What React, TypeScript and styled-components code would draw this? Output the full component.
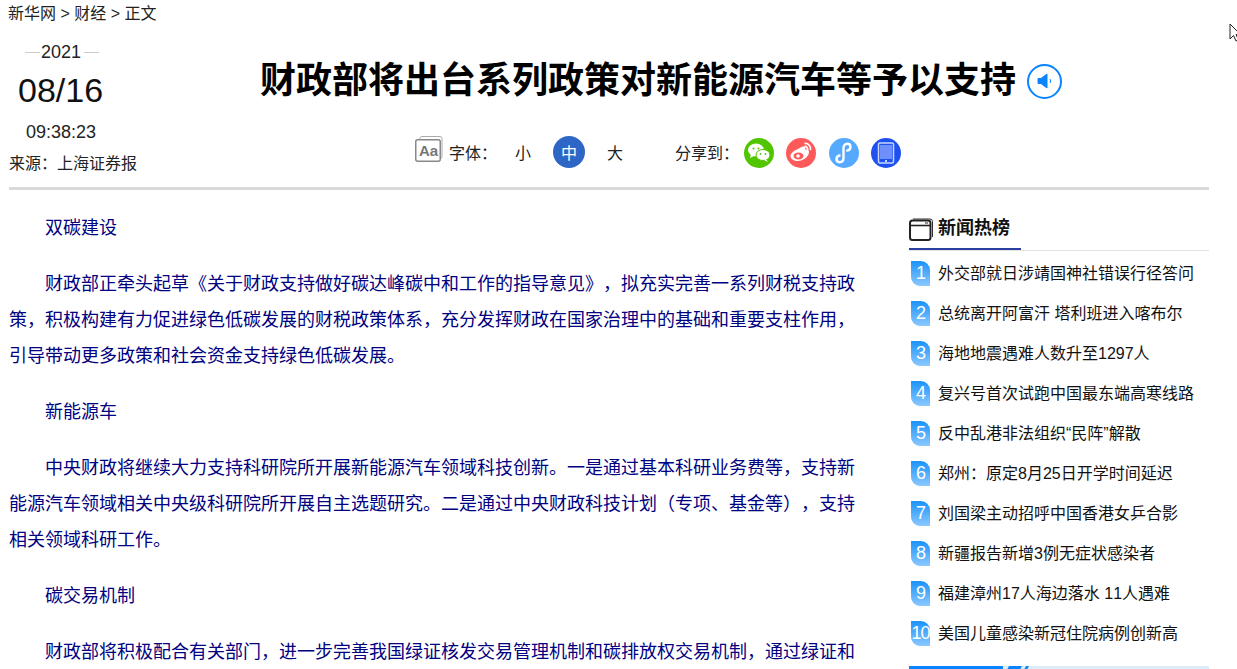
import { createGlobalStyle, styled } from 'styled-components';

const GlobalStyle = createGlobalStyle`
  html, body {
    margin: 0;
    padding: 0;
    height: 669px;
    overflow: hidden;
    background: #fff;
    font-family: "Liberation Sans", "Noto Sans CJK SC", sans-serif;
    font-kerning: none;
    text-spacing-trim: space-all;
  }
`;

const hotNews = [
  '外交部就日涉靖国神社错误行径答问',
  '总统离开阿富汗 塔利班进入喀布尔',
  '海地地震遇难人数升至1297人',
  '复兴号首次试跑中国最东端高寒线路',
  '反中乱港非法组织“民阵”解散',
  '郑州：原定8月25日开学时间延迟',
  '刘国梁主动招呼中国香港女乒合影',
  '新疆报告新增3例无症状感染者',
  '福建漳州17人海边落水 11人遇难',
  '美国儿童感染新冠住院病例创新高',
];

const App = () => {
  return (
    <Page>
      <GlobalStyle />
      <Header>
        <Breadcrumb>新华网 &gt; 财经 &gt; 正文</Breadcrumb>
        <HeaderMain>
          <DateBlock>
            <Year>2021</Year>
            <MonthDay>08/16</MonthDay>
            <Time>09:38:23</Time>
            <Source>来源：上海证券报</Source>
          </DateBlock>
          <TitleBlock>
            <TitleRow>
              <Title>财政部将出台系列政策对新能源汽车等予以支持</Title>
              <SpeakerButton>
                <svg width="16" height="16" viewBox="0 0 16 16">
                  <path d="M1 5.500h3L10 1v14L4 10.500H1z" fill="#0a84ff" stroke="#0a84ff" strokeLinejoin="round" />
                  <path d="M13 6c.7 1.200.7 2.800 0 4" fill="none" stroke="#0a84ff" />
                </svg>
              </SpeakerButton>
            </TitleRow>
            <Tools>
              <FontIcon width="28" height="26" viewBox="0 0 28 26">
                <path d="M5 3V2.500a2 2 0 0 1 2-2h18a2 2 0 0 1 2 2v18a2 2 0 0 1-2 2" fill="none" stroke="#aaa" />
                <rect x=".75" y="3.750" width="24.500" height="21.500" rx="2" fill="#fff" stroke="#888" strokeWidth="1.500" />
                <text x="4" y="20" fontSize="15" fontWeight="700" fill="#777" fontFamily="Liberation Sans">Aa</text>
              </FontIcon>
              <ToolLabel>字体：</ToolLabel>
              <SizeOption>小</SizeOption>
              <SizeOption $active>中</SizeOption>
              <SizeOption>大</SizeOption>
              <ShareLabel>分享到：</ShareLabel>
              <ShareIcon $bg="#50c500">
                <svg width="24" height="22" viewBox="0 0 24 22">
                  <ellipse cx="9" cy="8" rx="8" ry="6.500" fill="#fff" />
                  <path d="M4 12l-1 4 4-2z" fill="#fff" />
                  <ellipse cx="16" cy="13" rx="7" ry="5.500" fill="#fff" stroke="#50c500" />
                  <path d="M19 17l2 3-4-2z" fill="#fff" />
                  <circle cx="6.500" cy="6.500" r="1" fill="#50c500" />
                  <circle cx="11.500" cy="6.500" r="1" fill="#50c500" />
                  <circle cx="13.500" cy="12" r=".9" fill="#50c500" />
                  <circle cx="18.500" cy="12" r=".9" fill="#50c500" />
                </svg>
              </ShareIcon>
              <ShareIcon $bg="#ff5a5a">
                <svg width="24" height="22" viewBox="0 0 24 22">
                  <path d="M10 6.500c3.500-2.500 6-2.300 6.300-.8.200.9-.1 1.800-.1 2.100 2.100-.6 3.800 0 3.800 1.900C20 14.500 14.500 19 8.500 19 4.300 19 1.500 16.800 1.500 14 1.500 11.300 5.500 8 10 6.500z" fill="#fff" />
                  <ellipse cx="9.500" cy="14" rx="5" ry="3.400" fill="#ff5a5a" />
                  <circle cx="9" cy="14" r="1.800" fill="#fff" />
                  <path d="M15.500 1.500c3.700-.5 6.700 2.500 6 6.500M15.500 4.500c2-.3 3.500 1.400 3 3.500" fill="none" stroke="#fff" strokeWidth="1.700" />
                </svg>
              </ShareIcon>
              <ShareIcon $bg="#55aaff">
                <svg width="20" height="24" viewBox="0 0 20 24">
                  <path d="M5.500 14.500C3.500 15 2.500 16.300 2.500 18c0 1.800 1.300 3.200 3.200 3.200C8 21.200 9.500 19.500 9.500 17V7c0-2.500 1.500-4.200 3.800-4.200 1.900 0 3.200 1.400 3.200 3.200 0 1.900-1.300 3.200-3.300 3.600" fill="none" stroke="#fff" strokeWidth="2.400" strokeLinecap="round" />
                </svg>
              </ShareIcon>
              <ShareIcon $bg="#1f50f0">
                <svg width="18" height="22" viewBox="0 0 18 22">
                  <rect x="1.500" y="1" width="15" height="20" rx="1.500" fill="none" stroke="#c8d6ff" strokeWidth="1.500" />
                  <rect x="3" y="3" width="12" height="14" fill="#6f8ffa" />
                  <circle cx="9" cy="19" r="1" fill="#fff" />
                </svg>
              </ShareIcon>
            </Tools>
          </TitleBlock>
        </HeaderMain>
      </Header>
      <Content>
        <Article>
          <p>双碳建设</p>
          <p>财政部正牵头起草《关于财政支持做好碳达峰碳中和工作的指导意见》，拟充实完善一系列财税支持政策，积极构建有力促进绿色低碳发展的财税政策体系，充分发挥财政在国家治理中的基础和重要支柱作用，引导带动更多政策和社会资金支持绿色低碳发展。</p>
          <p>新能源车</p>
          <p>中央财政将继续大力支持科研院所开展新能源汽车领域科技创新。一是通过基本科研业务费等，支持新能源汽车领域相关中央级科研院所开展自主选题研究。二是通过中央财政科技计划（专项、基金等），支持相关领域科研工作。</p>
          <p>碳交易机制</p>
          <p>财政部将积极配合有关部门，进一步完善我国绿证核发交易管理机制和碳排放权交易机制，通过绿证和</p>
        </Article>
        <Sidebar>
          <SidebarHead>
            <SidebarTitle>
              <svg width="24" height="23" viewBox="0 0 24 23">
                <path d="M4 1h17a2.500 2.500 0 0 1 2.500 2.500V19" fill="none" stroke="#333" />
                <rect x="1" y="2.500" width="20.500" height="19.500" rx="2.500" fill="#fff" stroke="#222" strokeWidth="2" />
                <path d="M1 7.500h20.500" stroke="#222" strokeWidth="1.600" />
                <path d="M16 5h3" stroke="#222" />
              </svg>
              新闻热榜
            </SidebarTitle>
          </SidebarHead>
          <HotList>
            {hotNews.map((item, index) => (
              <HotItem key={item}>
                <Rank>{index + 1}</Rank>
                <HotText>{item}</HotText>
              </HotItem>
            ))}
          </HotList>
          <Banner>
            <BannerStrong />
            <BannerChip />
            <BannerSliver />
          </Banner>
        </Sidebar>
      </Content>
      <Cursor width="12" height="20" viewBox="0 0 12 20">
        <path d="M1 1v15l3.500-3.500L7 18l2.500-1-2.500-5.500h4.500z" fill="#fff" stroke="#222" />
      </Cursor>
    </Page>
  );
};

const Page = styled.div`
  position: relative;
  width: 1237px;
  height: 669px;
  overflow: hidden;
  padding-left: 9px;
  box-sizing: border-box;
  color: #000;
`;

const Header = styled.header`
  width: 1200px;
  height: 187px;
  border-bottom: 3px solid #d9d9d9;
  box-sizing: content-box;
`;

const Breadcrumb = styled.div`
  height: 27px;
  margin-left: -1px;
  font-size: 16px;
  line-height: 27px;
  color: #222;
`;

const HeaderMain = styled.div`
  display: flex;
`;

const DateBlock = styled.div`
  width: 128px;
  flex: none;
  display: flex;
  flex-direction: column;
  align-items: flex-start;
`;

const Year = styled.div`
  margin-top: 13px;
  display: flex;
  align-items: center;
  gap: 1px;
  font-size: 18px;
  line-height: 24px;
  color: #222;
  &::before,
  &::after {
    content: '';
    flex: none;
    width: 15px;
    height: 1px;
    background: #ccc;
  }
  &::before {
    margin-left: 16px;
  }
  &::after {
    margin-left: 2px;
  }
`;

const MonthDay = styled.div`
  margin: 4px 0 0 9px;
  font-size: 34px;
  line-height: 44px;
  color: #111;
`;

const Time = styled.div`
  margin: 8px 0 0 17px;
  font-size: 18px;
  line-height: 24px;
  color: #222;
`;

const Source = styled.div`
  margin-top: 8px;
  font-size: 16px;
  line-height: 24px;
  white-space: nowrap;
  color: #222;
`;

const TitleBlock = styled.div`
  flex: 1;
  display: flex;
  flex-direction: column;
  align-items: center;
`;

const TitleRow = styled.div`
  display: flex;
  align-items: center;
  height: 58px;
  margin-top: 25px;
  margin-left: -24px;
  gap: 11px;
`;

const Title = styled.h1`
  margin: 0;
  font-size: 36px;
  line-height: 58px;
  font-weight: 700;
  color: #000;
  white-space: nowrap;
`;

const SpeakerButton = styled.div`
  width: 35px;
  height: 35px;
  box-sizing: border-box;
  border: 2.5px solid #0a84ff;
  border-radius: 50%;
  display: flex;
  align-items: center;
  justify-content: center;
`;

const Tools = styled.div`
  display: flex;
  align-items: center;
  height: 32px;
  margin-top: 26px;
  margin-left: -18px;
`;

const FontIcon = styled.svg`
  display: block;
  margin: 0 6px 6px 0;
`;

const ToolLabel = styled.span`
  width: 58px;
  font-size: 16px;
  color: #222;
`;

const SizeOption = styled.span<{ $active?: boolean }>`
  width: 32px;
  height: 32px;
  border-radius: 50%;
  margin-right: 14px;
  display: flex;
  align-items: center;
  justify-content: center;
  font-size: 16px;
  color: ${({ $active }) => ($active ? '#fff' : '#222')};
  background: ${({ $active }) => ($active ? '#2e66c5' : 'transparent')};
`;

const ShareLabel = styled.span`
  width: 69px;
  margin-left: 30px;
  font-size: 16px;
  color: #222;
`;

const ShareIcon = styled.span<{ $bg: string }>`
  width: 30px;
  height: 30px;
  margin: 2px 12.3px 0 0;
  border-radius: 50%;
  background: ${({ $bg }) => $bg};
  display: flex;
  align-items: center;
  justify-content: center;
`;

const Content = styled.div`
  display: flex;
  width: 1200px;
  justify-content: space-between;
`;

const Article = styled.article`
  width: 846px;
  padding-top: 20px;
  font-size: 18px;
  line-height: 36px;
  color: #000080;

  p {
    margin: 0 0 20px;
    text-indent: 36px;
  }
`;

const Sidebar = styled.aside`
  width: 300px;
  padding-top: 26px;
  box-sizing: border-box;
`;

const SidebarHead = styled.div`
  height: 34px;
  border-bottom: 1px solid #e3e3e3;
`;

const SidebarTitle = styled.div`
  display: inline-flex;
  align-items: flex-start;
  gap: 5px;
  width: 112px;
  height: 24px;
  padding: 2px 0 6px;
  line-height: 21px;
  border-bottom: 2px solid #2b3f9f;
  font-size: 18px;
  font-weight: 700;
  color: #111;
`;

const HotList = styled.ul`
  list-style: none;
  margin: 0;
  padding: 2px 0 0;
`;

const HotItem = styled.li`
  display: flex;
  align-items: center;
  height: 40px;
  font-size: 16px;
  color: #111;
  white-space: nowrap;
`;

const HotText = styled.span`
  margin-top: -2px;
`;

const Rank = styled.span`
  width: 19px;
  height: 25px;
  margin: 0 8px 0 2px;
  flex: none;
  border-radius: 0 9px 0 9px;
  background: linear-gradient(180deg, #1a93fb, #8cc8ff);
  color: #fff;
  font-size: 18px;
  line-height: 25px;
  text-align: center;
  letter-spacing: -1px;
`;

const Banner = styled.div`
  display: flex;
  height: 4px;
  margin-top: 13px;
  background: #dcedf9;
`;

const BannerStrong = styled.div`
  width: 94px;
  background: #0a84ff;
`;

const BannerChip = styled.div`
  width: 13px;
  margin-left: 5px;
  background: #0a84ff;
  transform: skewX(-25deg);
`;

const BannerSliver = styled.div`
  width: 3px;
  margin-left: 4px;
  background: #0a84ff;
  transform: skewX(-25deg);
`;

const Cursor = styled.svg`
  position: absolute;
  left: 1229px;
  top: 23px;
`;

export default App;
